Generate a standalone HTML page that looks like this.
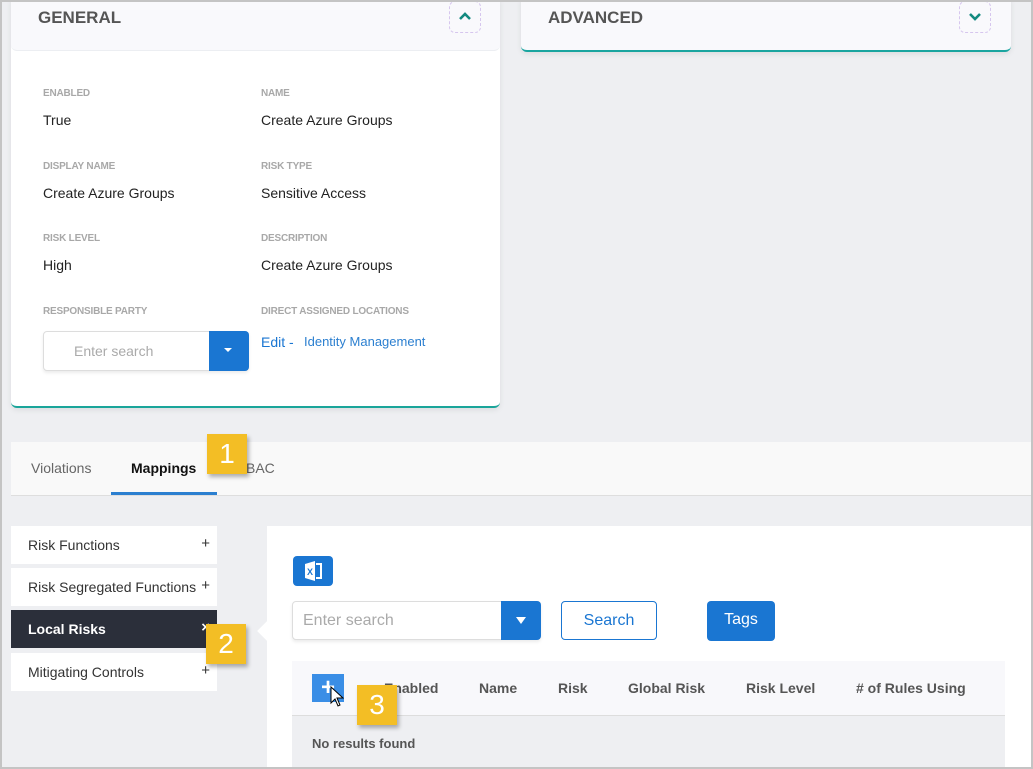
<!DOCTYPE html>
<html><head><style>
*{box-sizing:border-box;margin:0;padding:0}
body{width:1033px;height:769px;overflow:hidden;background:#eeeff2;font-family:"Liberation Sans",sans-serif;position:relative}
.a{position:absolute}
.lbl{font-size:10px;font-weight:bold;color:#a8a8a8;text-transform:uppercase;letter-spacing:-.2px}
.val{font-size:14px;color:#222}
.card{background:#fff;border-radius:6px;box-shadow:0 2px 6px rgba(0,0,0,.08)}
.tog{width:32px;height:32px;border:1px dashed #d6c6ee;border-radius:6px}
.mi{left:11px;width:206px;height:38px;background:#fff;font-size:14px;color:#333;padding:11px 0 0 17px}
.mi span{position:absolute;right:7px;top:9px;font-size:15px}
.call{background:#f3be25;color:#fff;font-size:28px;text-align:center;line-height:40px;width:40px;height:40px;box-shadow:2px 3px 4px rgba(0,0,0,.3)}
.th{top:680px;font-size:14px;font-weight:bold;color:#555}
</style></head><body>
<div class="a card" style="left:11px;top:-4px;width:489px;height:412px;border-bottom:2px solid #1aa59a"></div>
<div class="a" style="left:11px;top:-2px;width:489px;height:53px;background:#f9f9fc;border-bottom:1px solid #eceef2;border-radius:0 0 6px 6px"></div>
<div class="a" style="left:38px;top:8px;font-size:17px;font-weight:bold;color:#555">GENERAL</div>
<div class="a tog" style="left:449px;top:1px"><svg width="30" height="30"><path d="M10 17l5-5 5 5" stroke="#138a80" stroke-width="2.6" fill="none"/></svg></div>
<div class="a lbl" style="left:43px;top:88px">Enabled</div><div class="a val" style="left:43px;top:112px">True</div>
<div class="a lbl" style="left:261px;top:88px">Name</div><div class="a val" style="left:261px;top:112px">Create Azure Groups</div>
<div class="a lbl" style="left:43px;top:161px">Display Name</div><div class="a val" style="left:43px;top:185px">Create Azure Groups</div>
<div class="a lbl" style="left:261px;top:161px">Risk Type</div><div class="a val" style="left:261px;top:185px">Sensitive Access</div>
<div class="a lbl" style="left:43px;top:233px">Risk Level</div><div class="a val" style="left:43px;top:257px">High</div>
<div class="a lbl" style="left:261px;top:233px">Description</div><div class="a val" style="left:261px;top:257px">Create Azure Groups</div>
<div class="a lbl" style="left:43px;top:306px">Responsible Party</div>
<div class="a lbl" style="left:261px;top:306px">Direct Assigned Locations</div>
<div class="a" style="left:43px;top:331px;width:206px;height:40px;border:1px solid #ddd;border-radius:4px;box-shadow:0 2px 3px rgba(0,0,0,.08);background:#fff"><div class="a" style="left:30px;top:11px;font-size:14px;color:#aaa">Enter search</div><div class="a" style="right:-1px;top:-1px;width:40px;height:40px;background:#1a76d2;border-radius:0 4px 4px 0"><svg width="40" height="40"><path d="M15 17h8l-4 4z" fill="#fff"/></svg></div></div>
<div class="a" style="left:261px;top:334px;font-size:14px;color:#1a76d2">Edit -</div>
<div class="a" style="left:304px;top:334px;font-size:13px;color:#2b7fd0">Identity Management</div>

<div class="a card" style="left:521px;top:-4px;width:490px;height:56px;background:#f9f9fc;border-bottom:2px solid #1aa5a0"></div>
<div class="a" style="left:548px;top:8px;font-size:17px;font-weight:bold;color:#555">ADVANCED</div>
<div class="a tog" style="left:959px;top:1px"><svg width="30" height="30"><path d="M10 12l5 5 5-5" stroke="#138a80" stroke-width="2.6" fill="none"/></svg></div>

<div class="a" style="left:11px;top:442px;width:1022px;height:54px;background:#f9f9f9;border-bottom:1px solid #dedede"></div>
<div class="a" style="left:31px;top:460px;font-size:14px;color:#666">Violations</div>
<div class="a" style="left:131px;top:460px;font-size:14px;font-weight:bold;color:#111">Mappings</div>
<div class="a" style="left:246px;top:460px;font-size:14px;color:#666">BAC</div>
<div class="a" style="left:111px;top:492px;width:106px;height:3px;background:#2b7fd0"></div>

<div class="a mi" style="top:526px">Risk Functions<span>+</span></div>
<div class="a mi" style="top:568px">Risk Segregated Functions<span>+</span></div>
<div class="a mi" style="top:610px;background:#2b2f3a;color:#fff;font-weight:bold">Local Risks<span>×</span></div>
<div class="a mi" style="top:653px">Mitigating Controls<span>+</span></div>

<div class="a" style="left:267px;top:526px;width:766px;height:243px;background:#fff"></div>
<div class="a" style="left:260px;top:624px;width:14px;height:14px;background:#fff;transform:rotate(45deg)"></div>
<div class="a" style="left:293px;top:556px;width:40px;height:30px;background:#1a76d2;border-radius:4px"><svg width="40" height="30"><path d="M12 8l10-3v20l-10-3z" fill="#fff"/><path d="M23 8h5v14h-5" stroke="#fff" stroke-width="2" fill="none"/><text x="14" y="19" font-size="9" font-weight="bold" fill="#1a76d2" font-family="Liberation Sans">X</text></svg></div>
<div class="a" style="left:292px;top:601px;width:249px;height:39px;border:1px solid #ddd;border-radius:4px;background:#fff;box-shadow:0 2px 3px rgba(0,0,0,.08)"><div class="a" style="left:10px;top:10px;font-size:16px;color:#aaa">Enter search</div><div class="a" style="right:-1px;top:-1px;width:40px;height:39px;background:#1a76d2;border-radius:0 4px 4px 0"><svg width="40" height="39"><path d="M15 16h10l-5 7z" fill="#fff"/></svg></div></div>
<div class="a" style="left:561px;top:601px;width:96px;height:39px;border:1px solid #1a76d2;border-radius:4px;background:#fff;text-align:center;line-height:37px;font-size:16px;color:#1a76d2">Search</div>
<div class="a" style="left:707px;top:601px;width:68px;height:40px;background:#1a76d2;border-radius:4px;text-align:center;line-height:38px;font-size:16px;color:#fff">Tags</div>
<div class="a" style="left:292px;top:661px;width:713px;height:55px;background:#f8f8fb;border-bottom:1px solid #ddd"></div>
<div class="a" style="left:292px;top:716px;width:713px;height:53px;background:#eeeff2"></div>
<div class="a" style="left:312px;top:674px;width:32px;height:28px;background:#3a8ee6;color:#fff;font-size:24px;font-weight:bold;text-align:center;line-height:27px">+</div>
<div class="a th" style="left:384px">Enabled</div><div class="a th" style="left:479px">Name</div><div class="a th" style="left:558px">Risk</div><div class="a th" style="left:628px">Global Risk</div><div class="a th" style="left:746px">Risk Level</div><div class="a th" style="left:856px"># of Rules Using</div>
<div class="a" style="left:312px;top:736px;font-size:13px;font-weight:bold;color:#555">No results found</div>
<svg class="a" style="left:330px;top:686px" width="14" height="22"><path d="M1 1v16l4-4 3 7 2-1-3-7h6z" fill="#fff" stroke="#000"/></svg>

<div class="a call" style="left:207px;top:434px">1</div>
<div class="a call" style="left:206px;top:624px">2</div>
<div class="a call" style="left:357px;top:685px">3</div>
<div class="a" style="left:0;top:0;width:1033px;height:769px;border:2px solid #c4c4c4;pointer-events:none"></div>
</body></html>
